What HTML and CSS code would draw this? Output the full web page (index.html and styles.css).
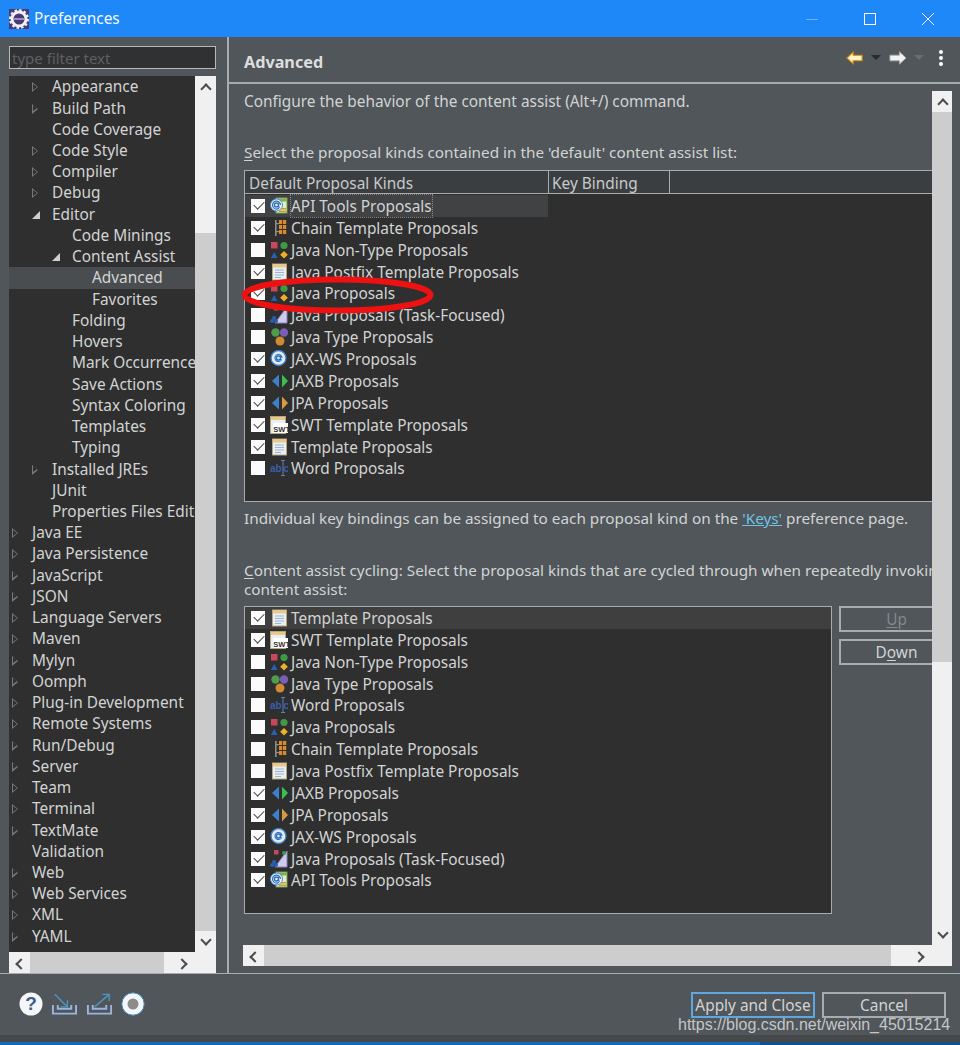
FILE: index.html
```html
<!DOCTYPE html>
<html lang="en">
<head>
<meta charset="utf-8">
<title>Preferences</title>
<link rel="stylesheet" href="styles.css">
</head>
<body>
<svg class="sprite" width="0" height="0" aria-hidden="true">
  <defs>
    <symbol id="i-api" viewBox="0 0 18 18">
      <rect x="6" y="1" width="11" height="15" fill="#e4edc8" stroke="#6f9a4c"/>
      <rect x="7" y="1.500" width="9.500" height="3" fill="#7fb04f"/>
      <rect x="9" y="11" width="7" height="1.500" fill="#c8a02a"/><rect x="9" y="13.500" width="7" height="1.500" fill="#c8a02a"/>
      <circle cx="6.500" cy="8" r="6" fill="#f4f8fc" stroke="#4d8ccb"/>
      <circle cx="6.500" cy="8" r="2" fill="none" stroke="#2a6fb8" stroke-width="1.400"/>
      <path d="M8.500 6v3.400q0 1 1.400.6M10.500 8a4 4 0 1 0-1.500 3.200" fill="none" stroke="#2a6fb8" stroke-width="1.200"/>
    </symbol>
    <symbol id="i-chain" viewBox="0 0 18 18">
      <rect x="5" y="1" width="1.600" height="16" fill="#8d8d8d"/>
      <rect x="6" y="4" width="3" height="1.200" fill="#8d8d8d"/><rect x="6" y="12" width="3" height="1.200" fill="#8d8d8d"/>
      <path d="M9 1h3.200v4H9zM13 1h3.200v4H13zM9 6h3.200v4H9zM13 6h3.200v4H13zM9 11h3.200v4H9zM13 11h3.200v4H13z" fill="#d98a2b"/>
    </symbol>
    <symbol id="i-nontype" viewBox="0 0 18 18">
      <rect x="1" y="1" width="6.500" height="6.500" fill="#c8475a"/>
      <circle cx="14" cy="4.500" r="3.600" fill="#3f9a44"/>
      <path d="M4.200 11l3.400 6H.8z" fill="#2a5eb0"/>
      <path d="M14 10l3.800 3.700-3.800 3.700-3.800-3.700z" fill="#eeb026"/>
    </symbol>
    <symbol id="i-doc" viewBox="0 0 18 18">
      <rect x="2.500" y="1" width="14" height="16" fill="#e8eef6" stroke="#b9a678"/>
      <rect x="3" y="1.500" width="13" height="3" fill="#e9c88a"/>
      <path d="M5 7h9M5 9.500h9M5 12h9M5 14.500h6" stroke="#9db2cd" stroke-width="1.100"/>
    </symbol>
    <symbol id="i-task" viewBox="0 0 18 18">
      <path d="M17 1v16H5z" fill="#cfcbea" stroke="#8a84c0"/>
      <rect x="4" y="0" width="4.500" height="4.500" fill="#c8475a"/>
      <circle cx="14" cy="3" r="2" fill="#3f9a44"/>
      <circle cx="2" cy="15" r="2" fill="#2a5eb0"/><circle cx="6" cy="15" r="2" fill="#2a5eb0"/><circle cx="4" cy="12" r="2" fill="#2a5eb0"/>
    </symbol>
    <symbol id="i-type" viewBox="0 0 18 18">
      <circle cx="5.500" cy="4.500" r="4.200" fill="#4e9c4c"/>
      <circle cx="14" cy="4.500" r="4.200" fill="#7a5db5"/>
      <circle cx="10" cy="13" r="4.500" fill="#cf8a35"/>
    </symbol>
    <symbol id="i-jaxws" viewBox="0 0 18 18">
      <circle cx="8.500" cy="8" r="7.500" fill="#dfeaf6" stroke="#3c7fc2" stroke-width="1.300"/>
      <circle cx="8.500" cy="8" r="2" fill="none" stroke="#2a6fb8" stroke-width="1.300"/>
      <path d="M10.500 6v3.200q0 1 1.400.5M12 8a3.500 3.500 0 1 0-1.400 2.800" fill="none" stroke="#2a6fb8" stroke-width="1.100"/>
    </symbol>
    <symbol id="i-jaxb" viewBox="0 0 18 18">
      <path d="M9 2.500v13l-7-6.500z" fill="#3f7fc8"/>
      <path d="M12 2.500v13l6-6.500z" fill="#3bc04f"/>
    </symbol>
    <symbol id="i-jpa" viewBox="0 0 18 18">
      <path d="M9 2.500v13l-7-6.500z" fill="#3f7fc8"/>
      <path d="M12 2.500v13l6-6.500z" fill="#d89a3c"/>
    </symbol>
    <symbol id="i-swt" viewBox="0 0 18 18">
      <rect x="0.500" y="0.500" width="15" height="17" fill="#e8eef6" stroke="#b9a678"/>
      <rect x="1" y="1" width="14" height="3" fill="#e9c88a"/>
      <rect x="3" y="7" width="15" height="10" fill="#fff"/>
      <text x="3.300" y="15.500" class="swt-label">SWT</text>
    </symbol>
    <symbol id="i-word" viewBox="0 0 18 18">
      <text x="0" y="13" class="word-label">ab</text>
      <path d="M11 1.500h4M11 16.500h4M13 1.500v15" stroke="#5b80c4" fill="none"/>
      <text x="13.500" y="13" class="word-label">c</text>
    </symbol>
  </defs>
</svg>

<div class="window">
  <header class="titlebar">
    <svg class="app-icon" width="20" height="20" viewBox="0 0 20 20" aria-hidden="true">
      <rect width="20" height="20" fill="#4a3a78"/>
      <circle cx="10" cy="10" r="7" fill="none" stroke="#f0f0f0" stroke-width="3"/>
      <circle cx="10" cy="10" r="9" fill="none" stroke="#f0f0f0" stroke-width="2" stroke-dasharray="2.500 2.200"/>
      <rect x="5" y="9" width="10" height="2" fill="#9a8fc0"/>
    </svg>
    <span class="title">Preferences</span>
    <div class="win-controls">
      <svg width="12" height="12" viewBox="0 0 12 12" aria-hidden="true"><path d="M0 6.500h12" stroke="#6fb2fa"/></svg>
      <svg width="12" height="12" viewBox="0 0 12 12" aria-hidden="true"><rect x=".5" y=".5" width="11" height="11" fill="none" stroke="#fff"/></svg>
      <svg width="12" height="12" viewBox="0 0 12 12" aria-hidden="true"><path d="M0 0l12 12M12 0L0 12" stroke="#fff"/></svg>
    </div>
  </header>

  <div class="main">
    <aside class="left">
      <input class="filter" placeholder="type filter text">
      <div class="tree-box">
        <div class="tree-col">
          <ul class="tree">
            <li class="l1 closed">Appearance</li>
            <li class="l1 closed">Build Path</li>
            <li class="l1">Code Coverage</li>
            <li class="l1 closed">Code Style</li>
            <li class="l1 closed">Compiler</li>
            <li class="l1 closed">Debug</li>
            <li class="l1 open">Editor</li>
            <li class="l2">Code Minings</li>
            <li class="l2 open">Content Assist</li>
            <li class="l3 selected">Advanced</li>
            <li class="l3">Favorites</li>
            <li class="l2">Folding</li>
            <li class="l2">Hovers</li>
            <li class="l2">Mark Occurrences</li>
            <li class="l2">Save Actions</li>
            <li class="l2">Syntax Coloring</li>
            <li class="l2">Templates</li>
            <li class="l2">Typing</li>
            <li class="l1 closed">Installed JREs</li>
            <li class="l1">JUnit</li>
            <li class="l1">Properties Files Editor</li>
            <li class="l0 closed">Java EE</li>
            <li class="l0 closed">Java Persistence</li>
            <li class="l0 closed">JavaScript</li>
            <li class="l0 closed">JSON</li>
            <li class="l0 closed">Language Servers</li>
            <li class="l0 closed">Maven</li>
            <li class="l0 closed">Mylyn</li>
            <li class="l0 closed">Oomph</li>
            <li class="l0 closed">Plug-in Development</li>
            <li class="l0 closed">Remote Systems</li>
            <li class="l0 closed">Run/Debug</li>
            <li class="l0 closed">Server</li>
            <li class="l0 closed">Team</li>
            <li class="l0 closed">Terminal</li>
            <li class="l0 closed">TextMate</li>
            <li class="l0">Validation</li>
            <li class="l0 closed">Web</li>
            <li class="l0 closed">Web Services</li>
            <li class="l0 closed">XML</li>
            <li class="l0 closed">YAML</li>
          </ul>
          <div class="vbar tree-vbar">
            <span class="arrow up"></span><div class="gap-a"></div><div class="thumb"></div><span class="arrow down"></span>
          </div>
        </div>
        <div class="hbar tree-hbar">
          <span class="arrow left-a"></span><div class="thumb"></div><span class="arrow right-a"></span><div class="corner"></div>
        </div>
      </div>
    </aside>

    <section class="right">
      <div class="page-head">
        <h1>Advanced</h1>
        <div class="nav-tools">
          <svg width="17" height="16" viewBox="0 0 19 16" aria-hidden="true"><path d="M1 8l7-6.500v3.500h10v6H8v3.500z" fill="#fff1c0" stroke="#d08a12" stroke-width="1.200"/></svg>
          <i class="caret dark"></i>
          <svg class="fwd" width="18" height="16" viewBox="0 0 19 16" aria-hidden="true"><path d="M18 8l-7-6.500v3.500H1v6h10v3.500z" fill="#f2f2f2" stroke="#a8a8a8"/></svg>
          <i class="caret dim"></i>
          <svg class="dots" width="6" height="18" viewBox="0 0 6 18" aria-hidden="true"><circle cx="3" cy="3" r="2" fill="#fff"/><circle cx="3" cy="9" r="2" fill="#fff"/><circle cx="3" cy="15" r="2" fill="#fff"/></svg>
        </div>
      </div>
      <div class="scroller">
        <div class="scroll-body">
          <div class="content">
            <p class="intro">Configure the behavior of the content assist (Alt+/) command.</p>
            <p class="lead"><u>S</u>elect the proposal kinds contained in the 'default' content assist list:</p>
            <div class="table t1">
              <div class="thead"><span class="th c1">Default Proposal Kinds</span><span class="th c2">Key Binding</span><span class="th c3"></span></div>
              <div class="row sel"><i class="cb on"></i><svg class="ic"><use href="#i-api"/></svg><span class="lbl focus">API Tools Proposals</span></div>
              <div class="row"><i class="cb on"></i><svg class="ic"><use href="#i-chain"/></svg><span class="lbl">Chain Template Proposals</span></div>
              <div class="row"><i class="cb"></i><svg class="ic"><use href="#i-nontype"/></svg><span class="lbl">Java Non-Type Proposals</span></div>
              <div class="row"><i class="cb on"></i><svg class="ic"><use href="#i-doc"/></svg><span class="lbl">Java Postfix Template Proposals</span></div>
              <div class="row"><i class="cb on"></i><svg class="ic"><use href="#i-nontype"/></svg><span class="lbl">Java Proposals</span></div>
              <div class="row"><i class="cb"></i><svg class="ic"><use href="#i-task"/></svg><span class="lbl">Java Proposals (Task-Focused)</span></div>
              <div class="row"><i class="cb"></i><svg class="ic"><use href="#i-type"/></svg><span class="lbl">Java Type Proposals</span></div>
              <div class="row"><i class="cb on"></i><svg class="ic"><use href="#i-jaxws"/></svg><span class="lbl">JAX-WS Proposals</span></div>
              <div class="row"><i class="cb on"></i><svg class="ic"><use href="#i-jaxb"/></svg><span class="lbl">JAXB Proposals</span></div>
              <div class="row"><i class="cb on"></i><svg class="ic"><use href="#i-jpa"/></svg><span class="lbl">JPA Proposals</span></div>
              <div class="row"><i class="cb on"></i><svg class="ic"><use href="#i-swt"/></svg><span class="lbl">SWT Template Proposals</span></div>
              <div class="row"><i class="cb on"></i><svg class="ic"><use href="#i-doc"/></svg><span class="lbl">Template Proposals</span></div>
              <div class="row"><i class="cb"></i><svg class="ic"><use href="#i-word"/></svg><span class="lbl">Word Proposals</span></div>
            </div>
            <p class="keys">Individual key bindings can be assigned to each proposal kind on the <a href="#">'Keys'</a> preference page.</p>
            <p class="cycle"><u>C</u>ontent assist cycling: Select the proposal kinds that are cycled through when repeatedly invoking<br>content assist:</p>
            <div class="cycle-wrap">
              <div class="table t2">
                <div class="row sel2"><i class="cb on"></i><svg class="ic"><use href="#i-doc"/></svg><span class="lbl">Template Proposals</span></div>
                <div class="row"><i class="cb on"></i><svg class="ic"><use href="#i-swt"/></svg><span class="lbl">SWT Template Proposals</span></div>
                <div class="row"><i class="cb"></i><svg class="ic"><use href="#i-nontype"/></svg><span class="lbl">Java Non-Type Proposals</span></div>
                <div class="row"><i class="cb"></i><svg class="ic"><use href="#i-type"/></svg><span class="lbl">Java Type Proposals</span></div>
                <div class="row"><i class="cb"></i><svg class="ic"><use href="#i-word"/></svg><span class="lbl">Word Proposals</span></div>
                <div class="row"><i class="cb"></i><svg class="ic"><use href="#i-nontype"/></svg><span class="lbl">Java Proposals</span></div>
                <div class="row"><i class="cb"></i><svg class="ic"><use href="#i-chain"/></svg><span class="lbl">Chain Template Proposals</span></div>
                <div class="row"><i class="cb"></i><svg class="ic"><use href="#i-doc"/></svg><span class="lbl">Java Postfix Template Proposals</span></div>
                <div class="row"><i class="cb on"></i><svg class="ic"><use href="#i-jaxb"/></svg><span class="lbl">JAXB Proposals</span></div>
                <div class="row"><i class="cb on"></i><svg class="ic"><use href="#i-jpa"/></svg><span class="lbl">JPA Proposals</span></div>
                <div class="row"><i class="cb on"></i><svg class="ic"><use href="#i-jaxws"/></svg><span class="lbl">JAX-WS Proposals</span></div>
                <div class="row"><i class="cb on"></i><svg class="ic"><use href="#i-task"/></svg><span class="lbl">Java Proposals (Task-Focused)</span></div>
                <div class="row"><i class="cb on"></i><svg class="ic"><use href="#i-api"/></svg><span class="lbl">API Tools Proposals</span></div>
              </div>
              <div class="side-btns">
                <button class="btn up-btn" disabled><u>U</u>p</button>
                <button class="btn">D<u>o</u>wn</button>
              </div>
            </div>
          </div>
          <div class="vbar main-vbar">
            <span class="arrow up"></span><div class="thumb"></div><div class="gap-b"></div><span class="arrow down"></span>
          </div>
          <svg class="annotation" width="200" height="44" viewBox="0 0 200 44" aria-hidden="true">
            <ellipse cx="98.500" cy="21" rx="93" ry="15.500" fill="none" stroke="#ee1111" stroke-width="6"/>
          </svg>
        </div>
        <div class="hbar main-hbar">
          <span class="arrow left-a"></span><div class="thumb"></div><span class="arrow right-a"></span>
        </div>
      </div>
    </section>
  </div>

  <footer class="footer">
    <div class="foot-icons">
      <svg width="24" height="24" viewBox="0 0 24 24" aria-hidden="true"><circle cx="12" cy="12" r="11.500" fill="#f4f6fa"/><text x="12" y="18" class="help-q">?</text></svg>
      <svg width="27" height="24" viewBox="0 0 28 24" aria-hidden="true"><path d="M2 13v9h24v-9M7 13v4h14v-4" fill="none" stroke="#9ab6de" stroke-width="2"/><path d="M4 2l13 13M17 8v7h-7" fill="none" stroke="#4e94bd" stroke-width="1.500"/></svg>
      <svg width="27" height="24" viewBox="0 0 28 24" aria-hidden="true"><path d="M2 13v9h24v-9M7 13v4h14v-4" fill="none" stroke="#9ab6de" stroke-width="2"/><path d="M9 15L24 2M17 2h7v7" fill="none" stroke="#4e94bd" stroke-width="1.500"/></svg>
      <svg width="24" height="24" viewBox="0 0 24 24" aria-hidden="true"><circle cx="12" cy="12" r="11.200" fill="#f4f6fa" stroke="#3f82b8"/><circle cx="12" cy="12" r="5.500" fill="#8c8c8c"/></svg>
    </div>
    <div class="foot-btns">
      <button class="btn primary">Apply and Close</button>
      <button class="btn">Cancel</button>
    </div>
    <span class="watermark">https://blog.csdn.net/weixin_45015214</span>
  </footer>
  <div class="taskstrip"><div class="strip-a"></div></div>
</div>
</body>
</html>
```
FILE: styles.css
```css
* { box-sizing: border-box; }
html, body { margin: 0; padding: 0; }
body { width: 960px; height: 1045px; overflow: hidden; background: #50565a; font-family: "Noto Sans", "Open Sans", sans-serif; font-size: 15.4px; color: #d2d4d4; }
.sprite { position: absolute; }
.window { display: flex; flex-direction: column; height: 1045px; }

.titlebar { height: 37px; background: #1e88f8; display: flex; align-items: center; padding-left: 9px; color: #fff; flex: none; }
.app-icon { margin-right: 5px; }
.title { font-size: 15.4px; color: #f4f8ff; margin-bottom: 1px; }
.win-controls { margin-left: auto; display: flex; gap: 46px; padding-right: 26px; align-items: center; }
.win-controls svg { display: block; }

.main { flex: none; height: 937px; display: flex; border-bottom: 1px solid #a9acac; }

.left { width: 229px; flex: none; border-right: 2px solid #a9acac; padding: 9px 12px 0 9px; display: flex; flex-direction: column; }
.filter { width: 207px; height: 23px; background: #2f3133; border: 1px solid #b8baba; padding: 0 2px; font: 15px "Noto Sans", sans-serif; color: #555; margin-bottom: 7px; outline: none; }
.filter::placeholder { color: #5e6062; opacity: 1; }
.tree-box { width: 207px; height: 897px; display: flex; flex-direction: column; }
.tree-col { display: flex; height: 876px; }
.tree { list-style: none; margin: 0; padding: 0.3px 0 0; width: 186px; height: 876px; background: #2f2f2f; overflow: hidden; }
.tree li { height: 21.240px; line-height: 21.240px; white-space: nowrap; position: relative; color: #d2d4d4; }
.l0 { padding-left: 23px; }
.l1 { padding-left: 43px; }
.l2 { padding-left: 63px; }
.l3 { padding-left: 83px; }
.tree li.selected { background: #4a4d4f; }
.tree .closed::before { content: ""; position: absolute; top: 6px; width: 0; height: 0; border-left: 6px solid #77797b; border-top: 5px solid transparent; border-bottom: 5px solid transparent; }
.tree .closed::after { content: ""; position: absolute; top: 7.500px; width: 0; height: 0; border-left: 4px solid #2f2f2f; border-top: 3px solid transparent; border-bottom: 3px solid transparent; }
.tree .open::before { content: ""; position: absolute; top: 7px; width: 0; height: 0; border-right: 8px solid #cfcfcf; border-top: 8px solid transparent; }
.l0.closed::before { left: 3px; } .l0.closed::after { left: 4px; }
.l1.closed::before { left: 23px; } .l1.closed::after { left: 24px; }
.l1.open::before { left: 23px; }
.l2.open::before { left: 43px; }

.vbar { width: 21px; background: #f0f0f0; display: flex; flex-direction: column; flex: none; }
.vbar .thumb { background: #cdcdcd; }
.tree-vbar { height: 876px; }
.gap-a { height: 136px; }
.tree-vbar .thumb { flex: 1; }
.gap-b { flex: 1; }
.arrow { flex: none; width: 21px; height: 21px; position: relative; display: block; }
.arrow::after { content: ""; position: absolute; left: 7px; top: 7px; width: 6px; height: 6px; border-left: 2px solid #4a4c4e; border-top: 2px solid #4a4c4e; }
.arrow.up::after { transform: rotate(45deg); top: 9px; }
.arrow.down::after { transform: rotate(225deg); top: 5px; }
.arrow.left-a::after { transform: rotate(-45deg); left: 8px; top: 8px; }
.arrow.right-a::after { transform: rotate(135deg); left: 4px; top: 8px; }
.hbar { height: 21px; background: #f0f0f0; display: flex; flex: none; }
.hbar .thumb { background: #cdcdcd; }
.tree-hbar .thumb { width: 134px; }
.tree-hbar .right-a { margin-left: auto; }
.corner { width: 21px; height: 21px; background: #f0f0f0; flex: none; }

.right { flex: 1; min-width: 0; padding-right: 8px; display: flex; flex-direction: column; }
.page-head { height: 47px; margin-right: -8px; border-bottom: 2px solid #a9acac; display: flex; align-items: center; padding: 4px 16px 0 15px; }
.page-head h1 { margin: 0; font-size: 16.200px; font-weight: 700; color: #dcdede; }
.nav-tools { margin-left: auto; display: flex; align-items: center; margin-top: -8px; }
.nav-tools svg { display: block; }
.caret { display: block; width: 0; height: 0; border-left: 5px solid transparent; border-right: 5px solid transparent; border-top: 5px solid #2a2a2a; margin-left: 8px; }
.caret.dim { border-top-color: #6a6d70; margin-left: 7px; }
.fwd { margin-left: 8px; }
.dots { margin-left: 14px; }

.scroller { margin: 7px 0 0 14px; width: 709px; height: 875px; display: flex; flex-direction: column; flex: none; }
.scroll-body { flex: 1; display: flex; min-height: 0; position: relative; }
.content { width: 689px; overflow: hidden; flex: none; padding-left: 1px; }
.content p { margin: 0; white-space: nowrap; line-height: 20px; }
.intro { height: 20px; margin-top: 1px !important; }
.lead { margin-top: 30px !important; font-size: 15.300px; }
u { text-underline-offset: 2px; }

.table { border: 1px solid #a9acac; background: #2f2f2f; }
.t1 { width: 700px; height: 332px; margin-top: 8px; }
.thead { display: flex; height: 23px; background: #3b3e40; border-bottom: 1px solid #a9acac; margin-bottom: 1px; }
.th { line-height: 22px; padding: 2px 0 0 4px; color: #c8cacb; border-right: 1px solid #a9acac; }
.c1 { width: 304px; }
.c2 { width: 121px; padding-left: 3px; }
.c3 { border-right: 0; }
.row { height: 21.880px; display: flex; align-items: center; white-space: nowrap; padding-left: 6px; }
.row.sel { width: 303px; background: #404244; }
.row.sel2 { background: #3f3f3f; }
.cb { width: 14px; height: 14px; background: #fbfbfb; flex: none; position: relative; display: block; }
.cb.on::after { content: ""; position: absolute; left: 3px; top: 2px; width: 9px; height: 5px; border-left: 1.300px solid #444; border-bottom: 1.300px solid #444; transform: rotate(-45deg); }
.ic { width: 18px; height: 18px; margin-left: 5px; flex: none; }
.lbl { margin-left: 3px; padding-top: 2px; line-height: 20px; color: #d2d4d4; }
.lbl.focus { outline: 1px dotted #888; }
.swt-label { font: 700 7.500px "Liberation Sans", sans-serif; fill: #333; }
.word-label { font: 700 10px "Liberation Sans", sans-serif; fill: #3a5eaa; }
.help-q { font: 700 19px "Liberation Sans", sans-serif; fill: #3d5f86; text-anchor: middle; }

.keys { margin-top: 6px !important; font-size: 15.300px; }
.keys a { color: #6fc3e6; }
.cycle { margin-top: 33px !important; line-height: 19px !important; height: 38px; font-size: 15.300px; }
.cycle-wrap { display: flex; margin-top: 7px; gap: 7px; }
.t2 { width: 588px; height: 308px; flex: none; }
.side-btns { display: flex; flex-direction: column; gap: 7px; }
.btn { background: transparent; border: 2px solid #a9acac; color: #d2d4d4; font: 15.4px "Noto Sans", sans-serif; padding: 0; height: 26px; width: 115px; }
.up-btn { color: #85888a; }

.main-vbar { width: 20px; }
.main-vbar .arrow { width: 20px; }
.main-vbar .thumb { height: 550px; }
.annotation { position: absolute; left: -4px; top: 183px; }
.main-hbar { width: 709px; }
.main-hbar .thumb { width: 627px; }
.main-hbar .right-a { margin-left: auto; margin-right: 20px; }

.footer { flex: none; height: 61px; position: relative; display: flex; align-items: flex-start; padding: 18px 14px 0 19px; }
.foot-icons { display: flex; align-items: center; gap: 8px; }
.foot-icons svg { display: block; }
.foot-btns { margin-left: auto; display: flex; gap: 7px; }
.foot-btns .btn { width: 124px; height: 26px; }
.btn.primary { border-color: #5fa7e0; }
.watermark { position: absolute; left: 678px; top: 42px; font: 16px "Liberation Sans", Arial, sans-serif; color: #c4c6c8; white-space: nowrap; }

.taskstrip { flex: 1; background: #14508c; border-top: 7px solid #46494c; }
.strip-a { width: 760px; height: 100%; background: #1668b8; }
```
